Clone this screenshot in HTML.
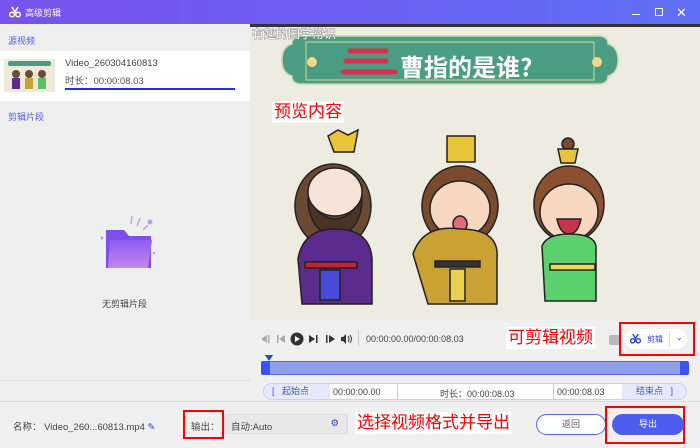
<!DOCTYPE html>
<html><head><meta charset="utf-8"><style>
*{margin:0;padding:0;box-sizing:border-box}
body{width:700px;height:448px;overflow:hidden;font-family:"Liberation Sans","Noto Sans CJK SC",sans-serif;background:#f0f0f0;position:relative;font-size:9px;color:#333}
.abs{position:absolute}
.title{left:0;top:0;width:700px;height:24px;background:linear-gradient(90deg,#7a52ee,#5f6ff6);color:#fff}
.left{left:0;top:24px;width:250px;height:356px;background:#efefef}
.red{border:2px solid #f00}
.rt{color:#f00;background:#fff;font-size:17px;line-height:22px;padding:0 2px}
</style></head><body>
<div class="abs title">
 <svg class="abs" style="left:9px;top:6px" width="12" height="12" viewBox="0 0 12 12"><circle cx="3" cy="8.5" r="2.3" fill="none" stroke="#fff" stroke-width="1.5"/><circle cx="9" cy="8.5" r="2.3" fill="none" stroke="#fff" stroke-width="1.5"/><path d="M3 1L6 6L9 1" stroke="#fff" stroke-width="1.5" fill="none"/></svg>
 <div class="abs" style="left:25px;top:6px;font-size:9px">高级剪辑</div>
 <div class="abs" style="left:632px;top:14px;width:8px;height:1px;background:#fff"></div>
 <div class="abs" style="left:655px;top:8px;width:8px;height:8px;border:1px solid #fff"></div>
 <div class="abs" style="left:676px;top:5px;color:#fff;font-size:13px">✕</div>
</div>
<div class="abs left">
 <div class="abs" style="left:8px;top:10px;color:#5560e8;font-size:9px">源视频</div>
 <div class="abs" style="left:0;top:27px;width:250px;height:50px;background:#fff"></div>
 <svg class="abs" style="left:4px;top:35px" width="51" height="33"><rect width="51" height="33" fill="#efe9da"/><rect x="4" y="2" width="43" height="5" rx="2" fill="#4a9c82"/><circle cx="12" cy="15" r="4" fill="#6b4a34"/><rect x="8" y="19" width="8" height="11" fill="#5b2c8e"/><circle cx="25" cy="15" r="4" fill="#6b4a34"/><rect x="21" y="19" width="8" height="11" fill="#c9a233"/><circle cx="38" cy="15" r="4" fill="#6b4a34"/><rect x="34" y="19" width="8" height="11" fill="#58c06a"/></svg>
 <div class="abs" style="left:65px;top:34px;font-size:9.5px;color:#444">Video_260304160813</div>
 <div class="abs" style="left:65px;top:49px;font-size:9.5px;color:#555">时长：00:00:08.03</div>
 <div class="abs" style="left:65px;top:64px;width:170px;height:2px;background:#2233dd"></div>
 <div class="abs" style="left:8px;top:86px;color:#5560e8;font-size:9px">剪辑片段</div>
 <svg class="abs" style="left:88px;top:188px" width="70" height="60" viewBox="0 0 70 60"><defs><linearGradient id="g" x1="0" y1="0" x2="0" y2="1"><stop offset="0" stop-color="#8e5cf0"/><stop offset="1" stop-color="#c486f0"/></linearGradient></defs>
 <circle cx="62" cy="10" r="2.5" fill="#b9a0f0"/><circle cx="14" cy="26" r="1.5" fill="#b9a0f0"/><circle cx="66" cy="41" r="1.2" fill="#b9a0f0"/>
 <path d="M43 12L44 4M49 14L52 6M55 18L60 13" stroke="#b9a0f0" stroke-width="1.3"/>
 <path d="M18 18h18l5 6h22v32H18z" fill="#7d4ef0"/>
 <path d="M22 28h42l-4 28H20z" fill="url(#g)"/></svg>
 <div class="abs" style="left:102px;top:273px;font-size:9px;color:#444">无剪辑片段</div>
</div>
<!-- video -->
<svg class="abs" style="left:250px;top:24px" width="450" height="296" viewBox="0 0 450 296">
 <rect width="450" height="296" fill="#eeebe1"/>
 <rect width="450" height="3" fill="#333"/>
 <path d="M52 12h296q10 0 10 8q10 3 10 16q0 13-10 16q0 8-10 8H52q-10 0-10-8q-10-3-10-16q0-13 10-16q0-8 10-8z" fill="#4a9c82" stroke="#c7d6a8" stroke-width="1.5"/>
 <path d="M56 18h288v38H56z" fill="none" stroke="#d8d6a0" stroke-width="1"/>
 <circle cx="62" cy="38" r="5" fill="#f2d98a"/><circle cx="347" cy="38" r="5" fill="#f2d98a"/>
 <path d="M100 27h36M96 37h40M93 48h52" stroke="#d9304c" stroke-width="5" stroke-linecap="round"/>
 <text x="150" y="52" font-size="24" font-weight="bold" fill="#fff" font-family="Noto Sans CJK SC,sans-serif">曹指的是谁?</text>
 <text x="2" y="14" font-size="12" fill="#fff" font-family="Noto Sans CJK SC,sans-serif" style="paint-order:stroke" stroke="#777" stroke-width="0.8">有趣的国学常识</text>
 <!-- char1 -->
 <g stroke="#222" stroke-width="1.5">
 <path d="M78 112l10-6l10 5l10-5l-4 22h-20z" fill="#e8c43a"/>
 <ellipse cx="83" cy="182" rx="38" ry="42" fill="#6b4a34"/>
 <ellipse cx="85" cy="168" rx="27" ry="24" fill="#f8e3d8"/>
 <path d="M58 175q27 40 54 0q0 30-27 40q-27-10-27-40z" fill="#4a3428"/>
 <path d="M48 235q5-30 37-30q35 0 37 30v45H52z" fill="#5b2c8e"/>
 <rect x="55" y="238" width="52" height="6" fill="#c2233a"/>
 <rect x="70" y="246" width="20" height="30" fill="#4a4ad8"/>
 </g>
 <!-- char2 -->
 <g stroke="#222" stroke-width="1.5">
 <rect x="197" y="112" width="28" height="26" fill="#e8c43a"/>
 <ellipse cx="210" cy="182" rx="38" ry="40" fill="#7a4a2c"/>
 <ellipse cx="210" cy="185" rx="30" ry="28" fill="#f8d8c0"/>
 <ellipse cx="210" cy="200" rx="7" ry="8" fill="#e86a7a"/>
 <path d="M163 230q10-30 47-25q40 0 37 30v45H178z" fill="#c9a233"/>
 <rect x="185" y="237" width="45" height="6" fill="#333"/>
 <rect x="200" y="245" width="15" height="32" fill="#e8d050"/>
 </g>
 <!-- char3 -->
 <g stroke="#222" stroke-width="1.5">
 <circle cx="318" cy="120" r="6" fill="#7a4a2c"/>
 <path d="M308 125h20l-3 14h-14z" fill="#e8c43a"/>
 <ellipse cx="319" cy="180" rx="35" ry="38" fill="#8a5030"/>
 <ellipse cx="319" cy="188" rx="29" ry="28" fill="#f8d8c0"/>
 <path d="M307 195h24q-3 15-12 15q-9 0-12-15z" fill="#c8344a"/>
 <path d="M292 222q5-12 27-12q25 0 27 12v55H295z" fill="#5ccf6e"/>
 <rect x="300" y="240" width="45" height="6" fill="#f0d84c"/>
 </g>
</svg>
<div class="abs rt" style="left:272px;top:101px">预览内容</div>
<!-- controls -->
<div class="abs" style="left:250px;top:320px;width:450px;height:60px;background:#f0f0f0"></div>
<svg class="abs" style="left:260px;top:332px" width="95" height="14" viewBox="0 0 95 14">
 <path d="M7 3L1 7L7 11z M8 3h1.5v8H8z" fill="#aaa"/>
 <path d="M17 3h1.5v8H17z M25 3L19 7L25 11z" fill="#aaa"/>
 <circle cx="37" cy="7" r="6.5" fill="#333"/><path d="M35 4l5 3l-5 3z" fill="#fff"/>
 <path d="M49 3l6 4l-6 4z M56 3h1.5v8H56z" fill="#333"/>
 <path d="M66 3h1.5v8H66z M69 3l6 4l-6 4z" fill="#333"/>
 <path d="M81 5h2l3-3v10l-3-3h-2z" fill="#333"/><path d="M88 4q2 3 0 6M90 3q3 4 0 8" stroke="#333" fill="none"/>
</svg>
<div class="abs" style="left:358px;top:330px;width:1px;height:16px;background:#ccc"></div>
<div class="abs" style="left:366px;top:334px;font-size:9px;color:#444">00:00:00.00/00:00:08.03</div>
<div class="abs rt" style="left:506px;top:327px">可剪辑视频</div>
<div class="abs" style="left:609px;top:335px;width:10px;height:10px;background:#bbb;border-radius:1px"></div>
<div class="abs red" style="left:619px;top:322px;width:76px;height:34px"></div>
<div class="abs" style="left:624px;top:329px;width:63px;height:20px;border-radius:10px;background:#fff"></div>
<svg class="abs" style="left:630px;top:333px" width="11" height="11" viewBox="0 0 12 12"><circle cx="3" cy="8.5" r="2.3" fill="none" stroke="#2244dd" stroke-width="1.5"/><circle cx="9" cy="8.5" r="2.3" fill="none" stroke="#2244dd" stroke-width="1.5"/><path d="M3 1L6 6L9 1" stroke="#2244dd" stroke-width="1.5" fill="none"/></svg>
<div class="abs" style="left:647px;top:334px;color:#3344cc;font-size:8px">剪辑</div>
<div class="abs" style="left:669px;top:331px;width:1px;height:16px;background:#e0e0e0"></div>
<div class="abs" style="left:676px;top:333px;color:#3344cc;font-size:8px">⌄</div>
<div class="abs" style="left:265px;top:355px;border-left:4px solid transparent;border-right:4px solid transparent;border-top:6px solid #2244dd"></div>
<div class="abs" style="left:261px;top:361px;width:428px;height:14px;background:#8e9ee8;border:1px solid #5568e8;border-radius:2px"></div>
<div class="abs" style="left:261px;top:361px;width:9px;height:14px;background:#3a55ee;border-radius:2px"></div>
<div class="abs" style="left:680px;top:361px;width:9px;height:14px;background:#3a55ee;border-radius:2px"></div>
<div class="abs" style="left:263px;top:383px;width:424px;height:17px;border:1px solid #c8d0f5;border-radius:9px;background:#fff;font-size:9px;color:#444"></div>
<div class="abs" style="left:264px;top:384px;width:66px;height:15px;background:#e5e9fb;border-radius:8px 0 0 8px;color:#4455cc;font-size:9px;line-height:15px;padding-left:8px">[&nbsp;&nbsp;&nbsp;起始点</div>
<div class="abs" style="left:333px;top:387px;font-size:9px;color:#444">00:00:00.00</div>
<div class="abs" style="left:397px;top:384px;width:1px;height:15px;background:#ccd"></div>
<div class="abs" style="left:440px;top:387px;font-size:9px;color:#444">时长：00:00:08.03</div>
<div class="abs" style="left:553px;top:384px;width:1px;height:15px;background:#ccd"></div>
<div class="abs" style="left:557px;top:387px;font-size:9px;color:#444">00:00:08.03</div>
<div class="abs" style="left:622px;top:384px;width:64px;height:15px;background:#e5e9fb;border-radius:0 8px 8px 0;color:#4455cc;font-size:9px;line-height:15px;padding-left:14px">结束点&nbsp;&nbsp;&nbsp;]</div>
<!-- bottom -->
<div class="abs" style="left:0;top:380px;width:250px;height:1px;background:#ddd"></div>
<div class="abs" style="left:0;top:401px;width:700px;height:47px;background:#f0f0f0"></div>
<div class="abs" style="left:0;top:401px;width:700px;height:1px;background:#ddd"></div>
<div class="abs" style="left:13px;top:419px;font-size:9.5px;color:#444">名称：&nbsp;Video_260...60813.mp4 <span style="color:#3344dd">✎</span></div>
<div class="abs red" style="left:183px;top:410px;width:41px;height:29px"></div>
<div class="abs" style="left:191px;top:419px;font-size:9.5px;color:#444">输出：</div>
<div class="abs" style="left:224px;top:414px;width:124px;height:20px;background:#e8e8e8;border:1px solid #ddd;border-radius:3px;font-size:9.5px;color:#444;padding:4px 0 0 6px">自动:Auto<span style="position:absolute;right:8px;top:3px;color:#3344dd">⚙</span></div>
<div class="abs rt" style="left:355px;top:412px">选择视频格式并导出</div>
<div class="abs" style="left:536px;top:414px;width:70px;height:21px;border:1.5px solid #5566ee;border-radius:11px;background:#fff;text-align:center;line-height:18px;font-size:9px;color:#555">返回</div>
<div class="abs red" style="left:605px;top:406px;width:80px;height:38px"></div>
<div class="abs" style="left:612px;top:414px;width:72px;height:21px;background:#4e5cf0;border-radius:11px;text-align:center;line-height:21px;font-size:9px;color:#fff">导出</div>
</body></html>
